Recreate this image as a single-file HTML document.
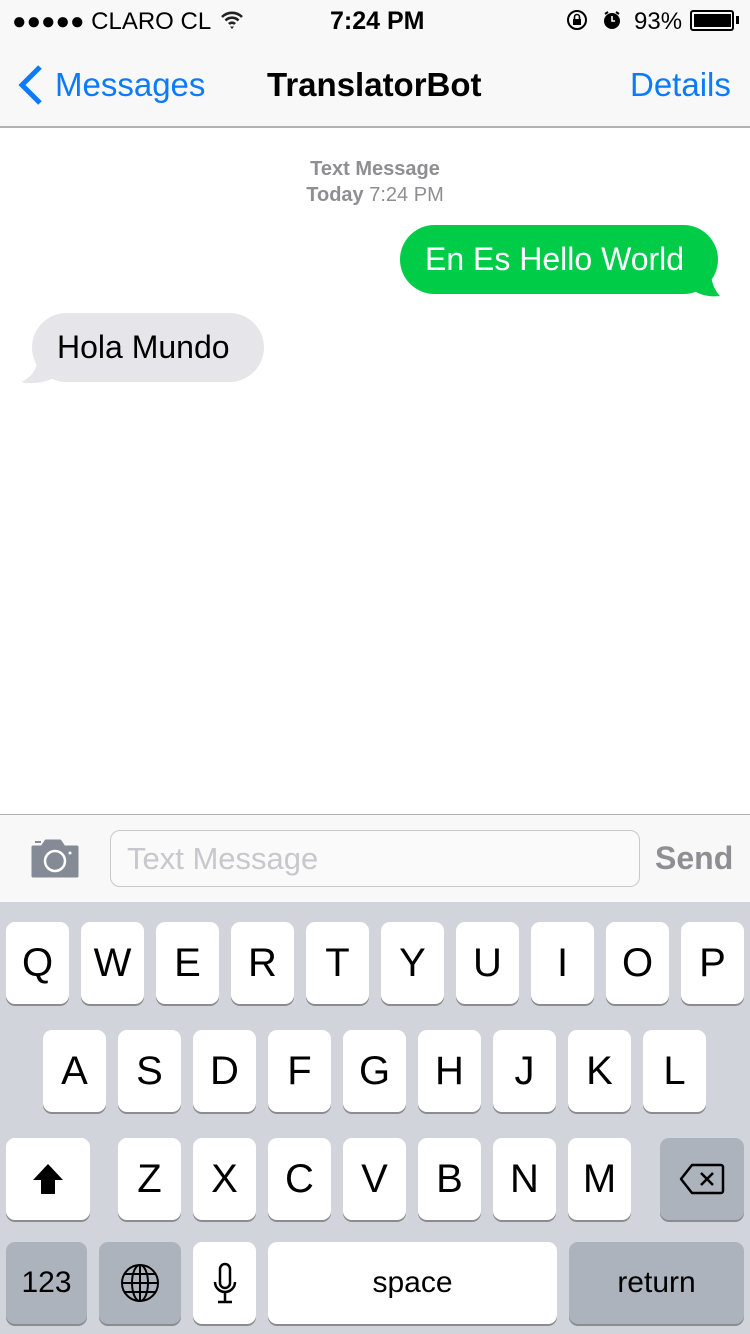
<!DOCTYPE html><html><head><meta charset="utf-8"><style>
*{margin:0;padding:0;box-sizing:border-box}
body{width:750px;height:1334px;position:relative;background:#fff;font-family:"Liberation Sans",sans-serif;overflow:hidden}
.a{position:absolute}
.k{position:absolute;width:63px;height:82px;background:#fff;border-radius:9px;box-shadow:0 2px 0 #8a8c90;font-size:40px;color:#000;display:flex;align-items:center;justify-content:center}
.g{background:#acb3bd}
</style></head><body>
<div class="a" style="left:0;top:0;width:750px;height:128px;background:#f8f8f8;border-bottom:2px solid #b2b2b2"></div>
<div class="a" style="left:12px;top:8px;font-size:24px;">●●●●● CLARO CL</div>
<svg class="a" style="left:220px;top:10px" width="24" height="20" viewBox="0 0 24 20"><path d="M2 7a14 14 0 0 1 20 0M5.5 10.5a9 9 0 0 1 13 0M9 14a4 4 0 0 1 6 0" stroke="#222" stroke-width="2.6" fill="none"/><path d="M10 16.5 12 19 14 16.5z" fill="#222"/></svg>
<div class="a" style="left:330px;top:7px;font-size:25px;font-weight:bold">7:24 PM</div>
<svg class="a" style="left:566px;top:9px" width="56" height="22"><circle cx="11" cy="11" r="9" fill="none" stroke="#000" stroke-width="2"/><rect x="7" y="10" width="8" height="6" fill="#000"/><path d="M8.5 10V8a2.5 2.5 0 0 1 5 0v2" stroke="#000" stroke-width="1.6" fill="none"/><circle cx="46" cy="12" r="8" fill="#000"/><path d="M46 7v5h3" stroke="#fff" stroke-width="1.6" fill="none"/><path d="M39 5l3-2M53 5l-3-2" stroke="#000" stroke-width="2"/></svg>
<div class="a" style="left:634px;top:8px;font-size:24px">93%</div>
<div class="a" style="left:690px;top:10px;width:44px;height:21px;border:2px solid #000;border-radius:3px;padding:2px"><div style="width:37px;height:13px;background:#000"></div></div>
<div class="a" style="left:736px;top:16px;width:3px;height:8px;background:#000"></div>
<svg class="a" style="left:16px;top:64px" width="28" height="42"><path d="M24 3 6 21l18 18" stroke="#0a7aff" stroke-width="5" fill="none"/></svg>
<div class="a" style="left:55px;top:66px;font-size:33px;color:#0a7aff">Messages</div>
<div class="a" style="left:267px;top:66px;font-size:33px;font-weight:bold">TranslatorBot</div>
<div class="a" style="left:630px;top:66px;font-size:33px;color:#0a7aff">Details</div>
<div class="a" style="left:0;top:156px;width:750px;text-align:center;font-size:20px;color:#8e8e93;line-height:26px"><b>Text Message</b><br><b>Today</b> 7:24 PM</div>
<svg class="a" style="left:690px;top:270px" width="40" height="30"><path d="M0 0h20q2 18 10 26-18 2-30-8z" fill="#00cc48"/></svg>
<div class="a" style="left:400px;top:225px;width:318px;height:69px;border-radius:35px;background:#00cc48;color:#fff;font-size:32px;padding-left:25px;line-height:69px">En Es Hello World</div>
<svg class="a" style="left:18px;top:358px" width="40" height="30"><path d="M40 0H20Q18 18 3 24q18 4 37-6z" fill="#e5e5ea"/></svg>
<div class="a" style="left:32px;top:313px;width:232px;height:69px;border-radius:35px;background:#e5e5ea;font-size:32px;padding-left:25px;line-height:69px">Hola Mundo</div>
<div class="a" style="left:0;top:814px;width:750px;height:88px;background:#f8f8f8;border-top:1px solid #b2b2b2"></div>
<svg class="a" style="left:30px;top:838px" width="50" height="40"><path d="M3 9h9l4-6h14l4 6h13v29H3z" fill="#858b96" stroke="#858b96" stroke-width="3" stroke-linejoin="round"/><rect x="5" y="3" width="6" height="2" fill="#858b96"/><circle cx="25" cy="23" r="10" fill="none" stroke="#fff" stroke-width="2.5"/><circle cx="40" cy="15" r="1.5" fill="#fff"/></svg>
<div class="a" style="left:110px;top:830px;width:530px;height:57px;border:1.5px solid #c8c8cd;border-radius:10px;background:#fafafa;font-size:31px;color:#c7c7cd;padding-left:16px;line-height:55px">Text Message</div>
<div class="a" style="left:655px;top:840px;font-size:32px;font-weight:bold;color:#8e8e93">Send</div>
<div class="a" style="left:0;top:902px;width:750px;height:432px;background:#d1d5db"></div>
<div class="k" style="left:6px;top:922px">Q</div><div class="k" style="left:81px;top:922px">W</div><div class="k" style="left:156px;top:922px">E</div><div class="k" style="left:231px;top:922px">R</div><div class="k" style="left:306px;top:922px">T</div><div class="k" style="left:381px;top:922px">Y</div><div class="k" style="left:456px;top:922px">U</div><div class="k" style="left:531px;top:922px">I</div><div class="k" style="left:606px;top:922px">O</div><div class="k" style="left:681px;top:922px">P</div>
<div class="k" style="left:43px;top:1030px">A</div><div class="k" style="left:118px;top:1030px">S</div><div class="k" style="left:193px;top:1030px">D</div><div class="k" style="left:268px;top:1030px">F</div><div class="k" style="left:343px;top:1030px">G</div><div class="k" style="left:418px;top:1030px">H</div><div class="k" style="left:493px;top:1030px">J</div><div class="k" style="left:568px;top:1030px">K</div><div class="k" style="left:643px;top:1030px">L</div>
<div class="k" style="left:6px;top:1138px;width:84px"><svg width="34" height="34"><path d="M17 2 32 18H24v14H10V18H2z" fill="#000"/></svg></div>
<div class="k" style="left:118px;top:1138px">Z</div><div class="k" style="left:193px;top:1138px">X</div><div class="k" style="left:268px;top:1138px">C</div><div class="k" style="left:343px;top:1138px">V</div><div class="k" style="left:418px;top:1138px">B</div><div class="k" style="left:493px;top:1138px">N</div><div class="k" style="left:568px;top:1138px">M</div>
<div class="k g" style="left:660px;top:1138px;width:84px"><svg width="46" height="34"><path d="M13 3h29a2 2 0 0 1 2 2v24a2 2 0 0 1-2 2H13L2 17z" fill="none" stroke="#000" stroke-width="2.5" stroke-linejoin="round"/><path d="M22 11l12 12M34 11 22 23" stroke="#000" stroke-width="2.5"/></svg></div>
<div class="k g" style="left:6px;top:1242px;width:81px;font-size:30px">123</div>
<div class="k g" style="left:99px;top:1242px;width:82px"><svg width="40" height="40"><g fill="none" stroke="#000" stroke-width="2"><circle cx="20" cy="20" r="18"/><ellipse cx="20" cy="20" rx="8" ry="18"/><path d="M20 2v36M2 20h36M5 11h30M5 29h30"/></g></svg></div>
<div class="k" style="left:193px;top:1242px"><svg width="26" height="42"><rect x="8" y="2" width="10" height="24" rx="5" fill="none" stroke="#000" stroke-width="2.5"/><path d="M3 20a10 10 0 0 0 20 0M13 30v9M6 40h14" stroke="#000" stroke-width="2.5" fill="none"/></svg></div>
<div class="k" style="left:268px;top:1242px;width:289px;font-size:30px">space</div>
<div class="k g" style="left:569px;top:1242px;width:175px;font-size:30px">return</div>
</body></html>
